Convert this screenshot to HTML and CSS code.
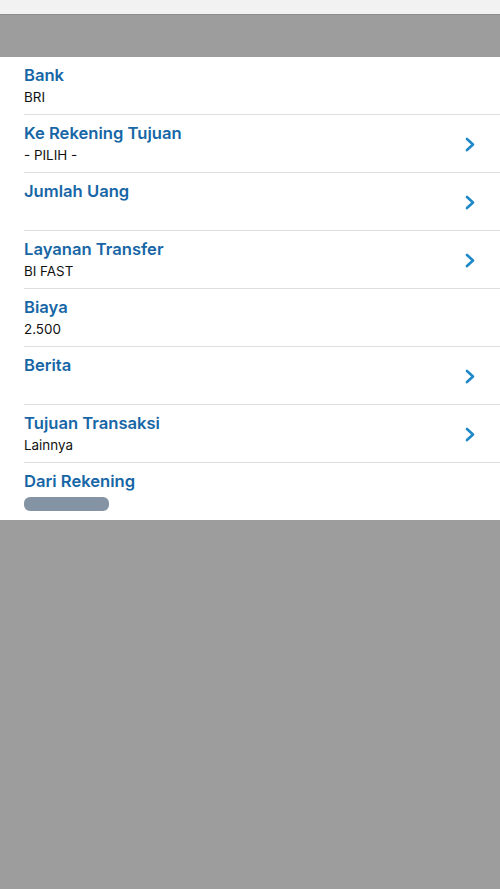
FILE: index.html
```html
<!DOCTYPE html>
<html lang="id">
<head>
    <meta charset="UTF-8">
    <meta name="viewport" content="width=device-width, initial-scale=1.0">
    <title>Transfer</title>
    <link rel="stylesheet" href="styles.css">
</head>
<body>
    <div class="status-bar"></div>
    <div class="top-shade"></div>
    <div class="form-list">
        <div class="row">
            <div class="row-text">
                <div class="label">Bank</div>
                <div class="value">BRI</div>
            </div>
        </div>
        <div class="row">
            <div class="row-text">
                <div class="label">Ke Rekening Tujuan</div>
                <div class="value">- PILIH -</div>
            </div>
            <svg class="chevron" viewBox="0 0 12 16"><path d="M3 2.5 L9 8 L3 13.5"/></svg>
        </div>
        <div class="row">
            <div class="row-text">
                <div class="label">Jumlah Uang</div>
                <div class="value"></div>
            </div>
            <svg class="chevron" viewBox="0 0 12 16"><path d="M3 2.5 L9 8 L3 13.5"/></svg>
        </div>
        <div class="row">
            <div class="row-text">
                <div class="label">Layanan Transfer</div>
                <div class="value">BI FAST</div>
            </div>
            <svg class="chevron" viewBox="0 0 12 16"><path d="M3 2.5 L9 8 L3 13.5"/></svg>
        </div>
        <div class="row">
            <div class="row-text">
                <div class="label">Biaya</div>
                <div class="value">2.500</div>
            </div>
        </div>
        <div class="row">
            <div class="row-text">
                <div class="label">Berita</div>
                <div class="value"></div>
            </div>
            <svg class="chevron" viewBox="0 0 12 16"><path d="M3 2.5 L9 8 L3 13.5"/></svg>
        </div>
        <div class="row">
            <div class="row-text">
                <div class="label">Tujuan Transaksi</div>
                <div class="value">Lainnya</div>
            </div>
            <svg class="chevron" viewBox="0 0 12 16"><path d="M3 2.5 L9 8 L3 13.5"/></svg>
        </div>
        <div class="row last">
            <div class="row-text">
                <div class="label">Dari Rekening</div>
                <div class="value"><span class="masked"></span></div>
            </div>
        </div>
    </div>
</body>
</html>
```

FILE: styles.css
```css
body {
    margin: 0;
    height: 889px;
    background: #9d9d9d;
    font-family: Inter, "Noto Sans", sans-serif;
    overflow: hidden;
}
.status-bar {
    height: 14px;
    background: #f2f2f2;
    border-bottom: 1px solid #8c8c8c;
}
.top-shade {
    height: 42px;
}
.form-list {
    background: #fff;
    padding-left: 24px;
}
.row {
    height: 57px;
    border-bottom: 1px solid #dedede;
    display: flex;
    align-items: center;
    padding-right: 24px;
}
.row.last {
    border-bottom: none;
}
.row-text {
    flex: 1;
    align-self: flex-start;
    padding-top: 8px;
}
.label {
    color: #1766a6;
    font-size: 16.6px;
    font-weight: 600;
    line-height: 20px;
}
.value {
    color: #111;
    font-size: 13.4px;
    line-height: 18px;
    margin-top: 3px;
    height: 18px;
}
.masked {
    display: inline-block;
    width: 85px;
    height: 14px;
    margin-top: 3px;
    border-radius: 6px;
    background: #8594a5;
}
.chevron {
    width: 12px;
    height: 17px;
    margin-top: 2px;
    fill: none;
    stroke: #1e88c8;
    stroke-width: 2.6;
    stroke-linecap: round;
    stroke-linejoin: round;
}
```
